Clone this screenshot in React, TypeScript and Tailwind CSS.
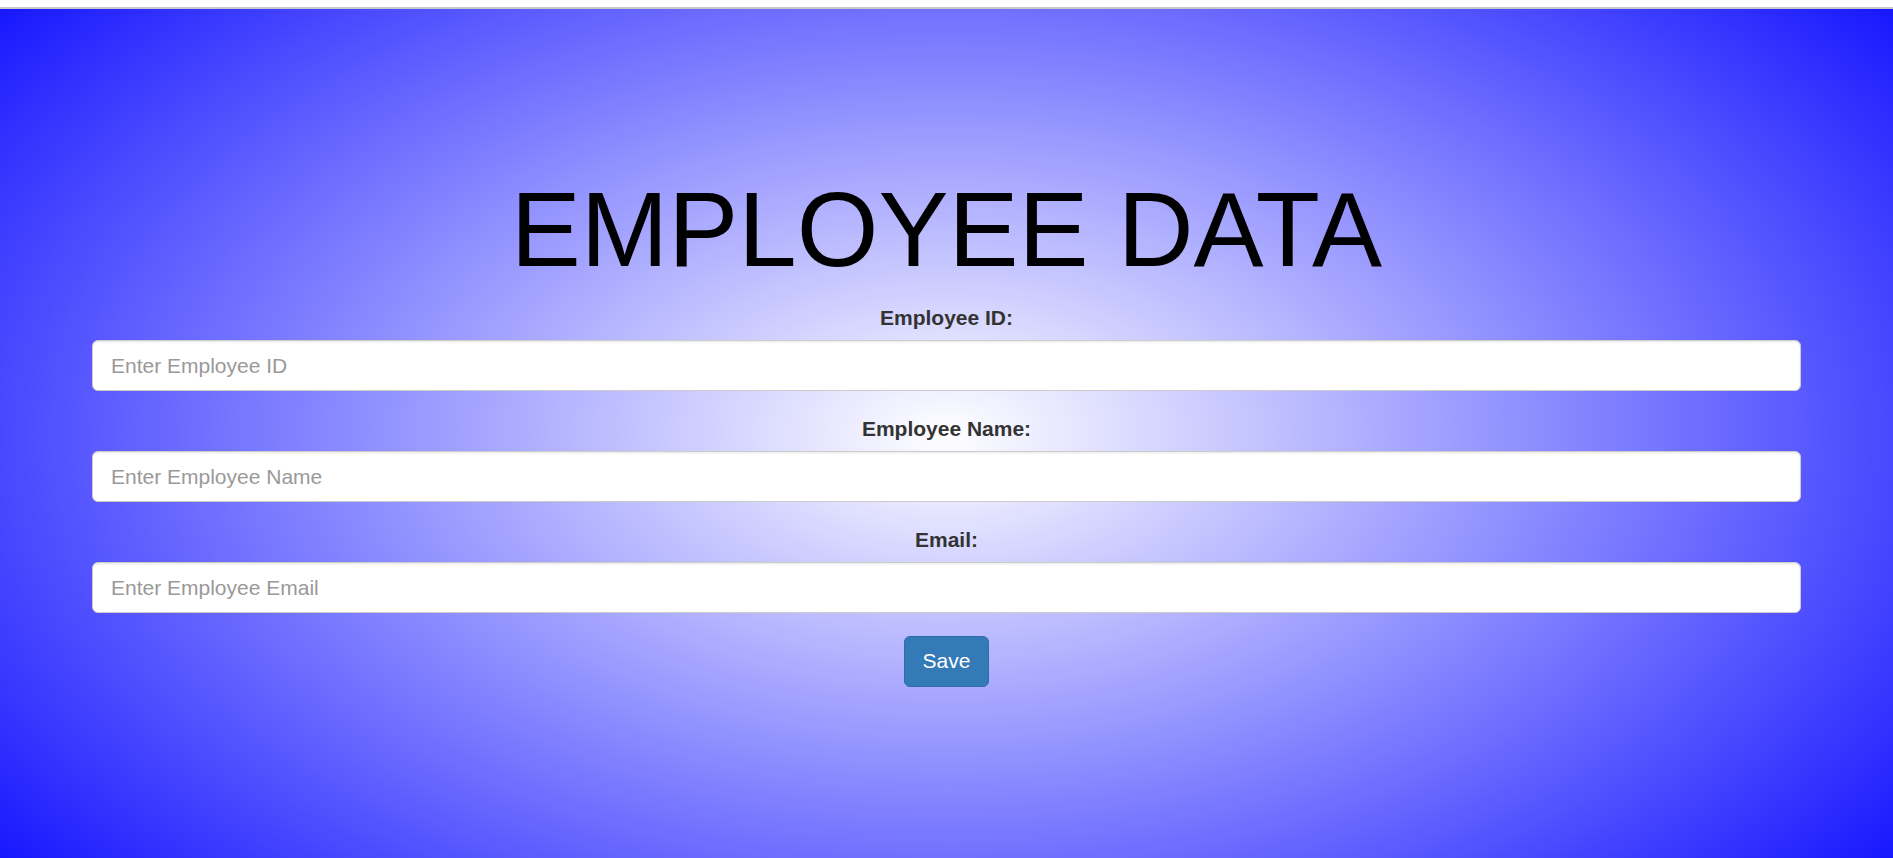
import React from "react";

export default function App() {
  const fields = [
    { label: "Employee ID:", placeholder: "Enter Employee ID" },
    { label: "Employee Name:", placeholder: "Enter Employee Name" },
    { label: "Email:", placeholder: "Enter Employee Email" },
  ];
  return (
    <div className="w-full h-[858px] overflow-hidden bg-white font-['Liberation_Sans',Arial,sans-serif]">
      <div className="h-[7px] bg-white" />
      <div className="h-[2px] bg-[#c8c8c8]" />
      <div className="h-[849px] bg-[image:radial-gradient(1320px_760px_at_50%_50%,#ffffff,#0000ff)] bg-[#0000ff] pt-[163px]">
        <div className="w-[1709px] mx-auto">
          <h1 className="text-center text-[105px] leading-[1.1] font-normal text-black mb-[15px]">
            EMPLOYEE DATA
          </h1>
          <form onSubmit={(e) => e.preventDefault()}>
            {fields.map((f) => (
              <div key={f.label} className="mb-[22.5px]">
                <label className="block text-center font-bold text-[21px] leading-[30px] mb-[7.5px] text-[#333]">
                  {f.label}
                </label>
                <input
                  type="text"
                  placeholder={f.placeholder}
                  className="block w-full h-[51px] rounded-[6px] border border-[#ccc] bg-white px-[18px] text-[21px] text-[#555] placeholder:text-[#999] shadow-[inset_0_1.5px_1.5px_rgba(0,0,0,0.075)] outline-none"
                />
              </div>
            ))}
            <div className="flex justify-center">
              <button
                type="submit"
                className="h-[51px] px-[18px] text-[21px] leading-[1.42857] text-white bg-[#337ab7] border border-[#2e6da4] rounded-[6px]"
              >
                Save
              </button>
            </div>
          </form>
        </div>
      </div>
    </div>
  );
}
